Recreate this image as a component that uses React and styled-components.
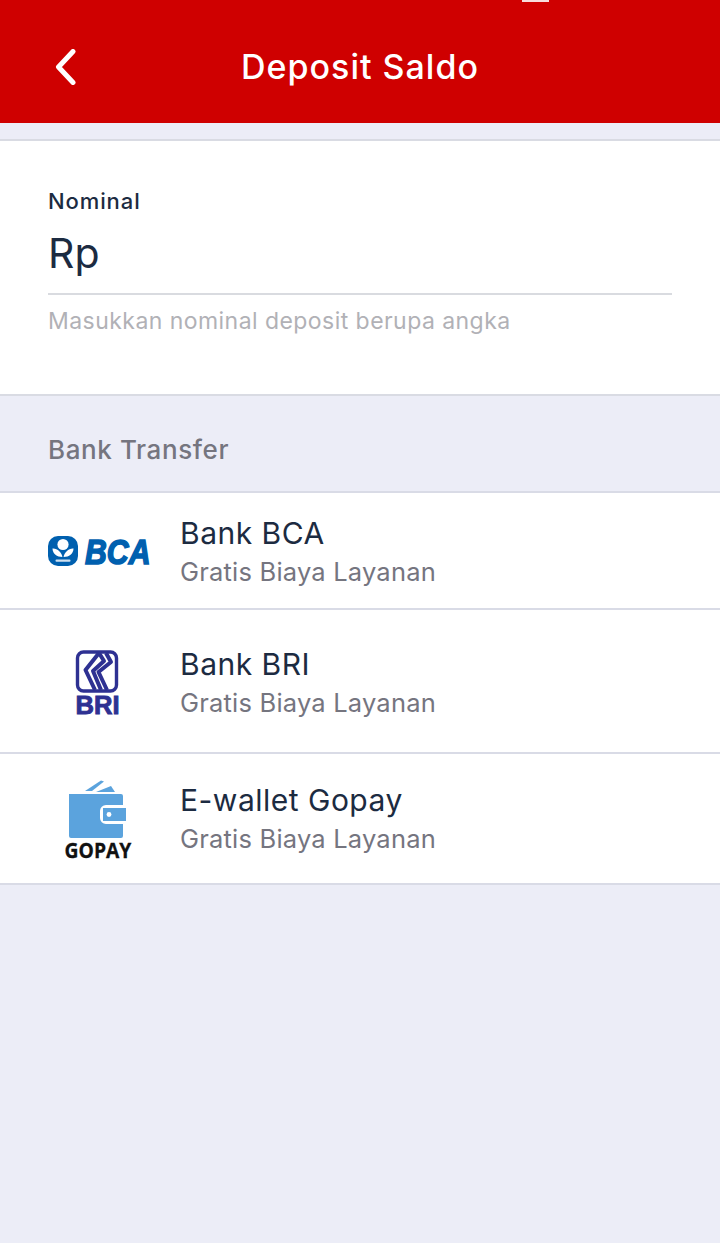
import React from "react";
import styled, { createGlobalStyle } from "styled-components";

const GlobalStyle = createGlobalStyle`
  html, body {
    margin: 0;
    padding: 0;
    background: #ecedf7;
    font-family: Inter, "Noto Sans", sans-serif;
  }
`;

const banks = [
  { name: "Bank BCA", Logo: BcaLogo, height: 115, shift: 0 },
  { name: "Bank BRI", Logo: BriLogo, height: 142, shift: 2 },
  { name: "E-wallet Gopay", Logo: GopayLogo, height: 129, shift: -2 },
];

export default function App() {
  return (
    <Page>
      <GlobalStyle />
      <Header>
        <StatusMark />
        <BackButton aria-label="Kembali">
          <svg width="24" height="36" viewBox="0 0 24 36" fill="none">
            <path
              d="M19 2.5 4.5 18 19 33.5"
              stroke="#fff"
              strokeWidth="5"
              strokeLinecap="round"
              strokeLinejoin="round"
            />
          </svg>
        </BackButton>
        <Title>Deposit Saldo</Title>
      </Header>

      <NominalCard>
        <FieldLabel>Nominal</FieldLabel>
        <AmountField>Rp</AmountField>
        <Hint>Masukkan nominal deposit berupa angka</Hint>
      </NominalCard>

      <SectionLabel>Bank Transfer</SectionLabel>

      <List>
        {banks.map(({ name, Logo, height, shift }) => (
          <Row key={name} $height={height}>
            <LogoSlot>
              <Logo />
            </LogoSlot>
            <RowText $shift={shift}>
              <RowName>{name}</RowName>
              <RowNote>Gratis Biaya Layanan</RowNote>
            </RowText>
          </Row>
        ))}
      </List>
    </Page>
  );
}

function BcaLogo() {
  return (
    <LogoSvg width="112" height="51" viewBox="-6 -10 112 51">
      <rect x="0" y="1" width="30" height="30" rx="10" fill="#0060af" />
      <circle cx="15" cy="9.5" r="5.6" fill="#fff" />
      <path d="M14.4 22C14 17.5 9 13 4.5 13.5 4.5 18.5 9 22 14.4 22Z" fill="#fff" />
      <path d="M15.6 22C16 17.5 21 13 25.5 13.5 25.5 18.5 21 22 15.6 22Z" fill="#fff" />
      <rect x="7.5" y="24.5" width="15" height="2.2" rx="1" fill="#cfe0f0" />
      <LogoWord
        transform="translate(37 29) scale(0.84 1)"
        fontSize="36"
        fill="#0060af"
        stroke="#0060af"
        strokeWidth="1.6"
        fontStyle="italic"
        fontWeight="700"
      >
        BCA
      </LogoWord>
    </LogoSvg>
  );
}

function BriLogo() {
  return (
    <LogoSvg width="50" height="82" viewBox="-2 -8 50 82">
      <rect x="2.5" y="4" width="39" height="39" rx="6" fill="#fff" stroke="#2e3192" strokeWidth="3.4" />
      <g fill="none" stroke="#2e3192" strokeWidth="4" strokeLinejoin="round">
        <path d="M24 5 10.5 22 20 42" />
        <path d="M31 5 36 14 23.5 24 32 42" />
        <path d="M24 5 29 13 18 23 26 42" />
      </g>
      <LogoWord
        x="22.5"
        y="66"
        fontSize="25"
        fill="#2e3192"
        stroke="#2e3192"
        strokeWidth="0.9"
        textAnchor="middle"
        textLength="44"
        lengthAdjust="spacingAndGlyphs"
        fontWeight="700"
      >
        BRI
      </LogoWord>
    </LogoSvg>
  );
}

function GopayLogo() {
  return (
    <LogoSvg width="74" height="96" viewBox="-4 -8 74 96">
      <path d="M20 12 36 1.5l3 1L27 12Z" fill="#5ba3dd" />
      <path d="M31 13 46 7l4 6Z" fill="#5ba3dd" />
      <path d="M4 15h52a2 2 0 0 1 2 2v9H41a6 6 0 0 0-6 6v7a6 6 0 0 0 6 6h17v12a2 2 0 0 1-2 2H6a2 2 0 0 1-2-2Z" fill="#5ba3dd" />
      <rect x="38" y="29" width="23" height="13" fill="#5ba3dd" />
      <circle cx="44" cy="35.5" r="2.4" fill="#fff" />
      <LogoWord
        transform="translate(33 79) scale(0.92 1)"
        fontSize="21"
        fill="#111"
        stroke="#111"
        strokeWidth="0.3"
        textAnchor="middle"
        fontWeight="700"
        $family="Open Sans"
      >
        GOPAY
      </LogoWord>
    </LogoSvg>
  );
}

const Page = styled.div`
  min-height: 1243px;
  background: #ecedf7;
`;

const Header = styled.header`
  position: relative;
  height: 123px;
  box-sizing: border-box;
  padding: 10px 0 0;
  background: #cf0000;
  display: flex;
  align-items: center;
  justify-content: center;
`;

const StatusMark = styled.span`
  position: absolute;
  top: 0;
  left: 522px;
  width: 27px;
  height: 2px;
  background: #f8dcdc;
`;

const BackButton = styled.button`
  position: absolute;
  left: 54px;
  top: 49px;
  padding: 0;
  border: 0;
  background: none;
  display: block;
  line-height: 0;
`;

const Title = styled.h1`
  margin: 0;
  color: #fff;
  font-size: 34px;
  line-height: 44px;
  font-weight: 500;
  letter-spacing: 1px;
`;

const NominalCard = styled.section`
  margin-top: 16px;
  height: 257px;
  box-sizing: border-box;
  padding: 46px 48px 0;
  background: #fff;
  border-top: 2px solid #d9dbe3;
  border-bottom: 2px solid #d9dbe3;
`;

const FieldLabel = styled.div`
  color: #1c2b41;
  font-size: 22px;
  line-height: 28px;
  font-weight: 500;
  letter-spacing: 0.9px;
`;

const AmountField = styled.div`
  height: 80px;
  box-sizing: border-box;
  padding-top: 14px;
  border-bottom: 2px solid #d9dbe0;
  color: #1c2b41;
  font-size: 41px;
  line-height: 48px;
`;

const Hint = styled.div`
  margin-top: 11px;
  color: #b1b1b6;
  font-size: 23px;
  line-height: 30px;
  letter-spacing: 0.45px;
`;

const SectionLabel = styled.h2`
  margin: 0;
  height: 95px;
  box-sizing: border-box;
  padding: 37px 48px 0;
  color: #75757f;
  font-size: 26px;
  line-height: 34px;
  font-weight: 500;
  letter-spacing: 0.6px;
`;

const List = styled.div`
  border-top: 2px solid #d9dbe6;
`;

const Row = styled.div`
  height: ${(p) => p.$height + 2}px;
  box-sizing: border-box;
  padding-left: 48px;
  display: flex;
  align-items: center;
  gap: 32px;
  background: #fff;
  border-bottom: 2px solid #d9dbe6;
`;

const LogoSlot = styled.div`
  width: 100px;
  display: flex;
  justify-content: center;
  flex-shrink: 0;
`;

const LogoSvg = styled.svg`
  flex-shrink: 0;
  display: block;
`;

const RowText = styled.div`
  display: flex;
  flex-direction: column;
  gap: 1px;
  padding-top: 1px;
  margin-top: ${(p) => p.$shift}px;
`;

const RowName = styled.div`
  color: #1c2b41;
  font-size: 30px;
  line-height: 40px;
  letter-spacing: 0.5px;
`;

const RowNote = styled.div`
  color: #75757f;
  font-size: 25.5px;
  line-height: 36px;
  letter-spacing: 0.2px;
`;

const LogoWord = styled.text`
  font-family: ${(p) => p.$family || "Liberation Sans"}, Arial, sans-serif;
`;
